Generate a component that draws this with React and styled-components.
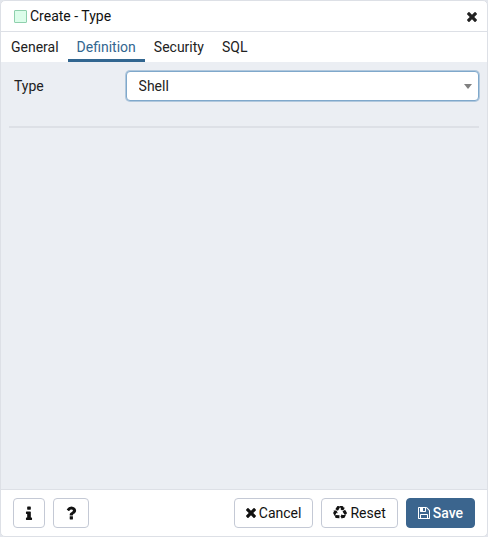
import React, { useState } from 'react'
import styled, { createGlobalStyle } from 'styled-components'

const GlobalStyle = createGlobalStyle`
  *, *::before, *::after {
    box-sizing: border-box;
  }
  body {
    margin: 0;
    background: #e3e6ec;
  }
  body, button, select {
    font-family: Roboto, 'Liberation Sans', sans-serif;
    font-size: 14px;
    line-height: 20px;
    color: #222222;
  }
`
const Dialog = styled.section`
  display: flex;
  flex-direction: column;
  min-height: 100vh;
  background: #ffffff;
  border: 1px solid #dde0e6;
  border-radius: 5px;
  overflow: hidden;
`
const Header = styled.header`
  display: flex;
  align-items: center;
  gap: 3px;
  height: 31px;
  padding: 0 10px 0 13px;
  border-bottom: 1px solid #dde0e6;
`
const TypeIcon = styled.span`
  width: 13px;
  height: 13px;
  background: #dcfdea;
  border: 1px solid #8fd0ad;
  border-radius: 1px;
`
const Title = styled.h1`
  flex: 1;
  margin: 0;
  font-size: 14px;
  font-weight: 400;
  line-height: 20px;
  color: #111111;
`
const Close = styled.button`
  display: flex;
  padding: 2px 0 0;
  background: none;
  border: none;
  cursor: pointer;
`
const Tabs = styled.nav`
  display: flex;
  height: 30px;
  padding-left: 1px;
`
const Tab = styled.button`
  padding: 0 9px;
  color: ${(props) => (props.$active ? '#326690' : '#222222')};
  background: none;
  border: none;
  border-top: 3px solid transparent;
  border-bottom: 3px solid ${(props) => (props.$active ? '#326690' : 'transparent')};
  cursor: pointer;
`
const Panel = styled.main`
  flex: 1;
  padding: 9px 8px;
  background: #ebeef3;
`
const Field = styled.div`
  display: flex;
  align-items: center;
  padding-left: 5px;
`
const Label = styled.label`
  flex: 0 0 24%;
`
const SelectBox = styled.div`
  position: relative;
  flex: 1;
`
const Select = styled.select`
  display: block;
  width: 100%;
  height: 30px;
  padding: 0 24px 0 12px;
  background: #ffffff;
  border: 1px solid #7fa8cb;
  border-radius: 4px;
  box-shadow: 0 0 0 1px #b1c8dd;
  outline: none;
  appearance: none;
`
const Arrow = styled.svg`
  position: absolute;
  top: 13px;
  right: 7px;
  width: 8px;
  height: 5px;
  fill: #808080;
  pointer-events: none;
`
const Divider = styled.hr`
  height: 2px;
  margin: 25px 0 0;
  background: #dde0e6;
  border: none;
`
const Footer = styled.footer`
  display: flex;
  gap: 8px;
  padding: 8px 12px;
  border-top: 1px solid #dde0e6;
`
const Spacer = styled.div`
  flex: 1;
`
const Button = styled.button`
  display: flex;
  align-items: center;
  justify-content: center;
  gap: 3px;
  height: 30px;
  padding: 0 ${(props) => (props.$square ? 8 : 11)}px;
  font-weight: ${(props) => (props.$primary ? 500 : 400)};
  color: ${(props) => (props.$primary ? '#ffffff' : '#111111')};
  background: ${(props) => (props.$primary ? '#3b658e' : '#ffffff')};
  border: 1px solid ${(props) => (props.$primary ? '#3b658e' : '#c4c9d5')};
  border-radius: 4px;
  cursor: pointer;
`
const Glyph = styled.svg`
  flex: none;
  width: ${(props) => props.$size}px;
  height: ${(props) => props.$size}px;
  fill: currentColor;
`

const Times = () => (
  <Glyph viewBox='302 366 1188 1188' $size={10} aria-hidden='true'>
    <path d='M1490 1322q0 40-28 68l-136 136q-28 28-68 28t-68-28l-294-294-294 294q-28 28-68 28t-68-28l-136-136q-28-28-28-68t28-68l294-294-294-294q-28-28-28-68t28-68l136-136q28-28 68-28t68 28l294 294 294-294q28-28 68-28t68 28l136 136q28 28 28 68t-28 68l-294 294 294 294q28 28 28 68z' />
  </Glyph>
)
const Info = () => (
  <Glyph viewBox='160 64 1472 1472' $size={14} aria-hidden='true'>
    <path d='M1216 1344v128q0 26-19 45t-45 19h-512q-26 0-45-19t-19-45v-128q0-26 19-45t45-19h64v-384h-64q-26 0-45-19t-19-45v-128q0-26 19-45t45-19h384q26 0 45 19t19 45v576h64q26 0 45 19t19 45zm-128-1152v192q0 26-19 45t-45 19h-256q-26 0-45-19t-19-45v-192q0-26 19-45t45-19h256q26 0 45 19t19 45z' />
  </Glyph>
)
const Question = () => (
  <Glyph viewBox='0 0 1792 1792' $size={18} aria-hidden='true'>
    <path d='M1088 1256v240q0 16-12 28t-28 12h-240q-16 0-28-12t-12-28v-240q0-16 12-28t28-12h240q16 0 28 12t12 28zm316-600q0 54-15.500 101t-35 76.500-55 59.500-57.500 43.500-61 35.500q-41 23-68.500 65t-27.500 67q0 17-12 32.500t-28 15.500h-240q-15 0-25.500-18.500t-10.500-37.500v-45q0-83 65-156.500t143-108.500q59-27 84-56t25-76q0-42-46.500-74t-107.500-32q-65 0-108 29-35 25-107 115-13 16-31 16-12 0-25-8l-164-125q-13-10-15.500-25t5.500-28q160-266 464-266 80 0 161 31t146 83 106 127.500 41 158.500z' />
  </Glyph>
)
// three bent arrows chasing each other
const Recycle = () => (
  <Glyph viewBox='0 0 1792 1792' $size={14} aria-hidden='true'>
    <path d='M836 1169l-15 368-2 22-420-29q-36-3-67-31.500t-47-65.500q-11-27-14.500-55t4-65 12-55 21.500-64 19-53q78 12 509 28zm-387-586l180 379-147-92q-63 72-111.500 144.500t-72.500 125-39.500 94.500-18.500 63l-4 21-190-357q-17-26-18-56t6-47l8-18q35-63 114-188l-140-86zm1231 517l-188 359q-12 29-36.500 46.500t-43.500 20.500l-18 4q-71 7-219 12l8 164-230-367 211-362 7 173q170 16 283 5t170-33zm-785-924q-47 63-265 435l-317-187-19-12 225-356q20-31 60-45t80-10q24 2 48.500 12t42 21 41.500 33 36 34.500 36 39.500 32 35zm655 307l212 363q18 37 12.500 76t-27.500 74q-13 20-33 37t-38 28-48.500 22-47 16-51.500 14-46 12q-34-72-265-436l313-195zm-143-226l142-83-220 373-419-20 151-86q-34-89-75-166t-75.500-123.500-64.500-80-47-46.500l-17-13 405 1q31-3 58 10.500t39 28.500l11 15q39 61 112 190z' />
  </Glyph>
)
const Floppy = () => (
  <Glyph viewBox='128 128 1536 1536' $size={12} aria-hidden='true'>
    <path d='M512 1536h768v-384h-768v384zm896 0h128v-896q0-14-10-38.5t-20-34.5l-281-281q-10-10-34-20t-39-10v416q0 40-28 68t-68 28h-576q-40 0-68-28t-28-68v-416h-128v1280h128v-416q0-40 28-68t68-28h832q40 0 68 28t28 68v416zm-384-928v-320q0-13-9.5-22.5t-22.5-9.5h-192q-13 0-22.5 9.5t-9.5 22.5v320q0 13 9.5 22.5t22.500 9.500h192q13 0 22.500-9.500t9.500-22.500zm640 32v928q0 40-28 68t-68 28h-1344q-40 0-68-28t-28-68v-1344q0-40 28-68t68-28h928q40 0 88 20t76 48l280 280q28 28 48 76t20 88z' />
  </Glyph>
)

const tabs = ['General', 'Definition', 'Security', 'SQL']

export default function App() {
  const [tab, setTab] = useState('Definition')
  const [type, setType] = useState('Shell')

  return (
    <>
      <GlobalStyle />
      <Dialog>
        <Header>
          <TypeIcon />
          <Title>Create - Type</Title>
          <Close type='button' aria-label='Close'>
            <Times />
          </Close>
        </Header>
        <Tabs>
          {tabs.map((name) => (
            <Tab
              key={name}
              type='button'
              $active={name === tab}
              onClick={() => setTab(name)}
            >
              {name}
            </Tab>
          ))}
        </Tabs>
        <Panel>
          <Field>
            <Label htmlFor='type'>Type</Label>
            <SelectBox>
              <Select
                id='type'
                value={type}
                onChange={(e) => setType(e.target.value)}
              >
                <option>Shell</option>
              </Select>
              <Arrow viewBox='0 0 8 5' aria-hidden='true'>
                <path d='M0 0h8L4 5z' />
              </Arrow>
            </SelectBox>
          </Field>
          <Divider />
        </Panel>
        <Footer>
          <Button type='button' $square aria-label='Info'>
            <Info />
          </Button>
          <Button type='button' $square aria-label='Help'>
            <Question />
          </Button>
          <Spacer />
          <Button type='button'>
            <Times />
            Cancel
          </Button>
          <Button type='button'>
            <Recycle />
            Reset
          </Button>
          <Button type='button' $primary>
            <Floppy />
            Save
          </Button>
        </Footer>
      </Dialog>
    </>
  )
}
